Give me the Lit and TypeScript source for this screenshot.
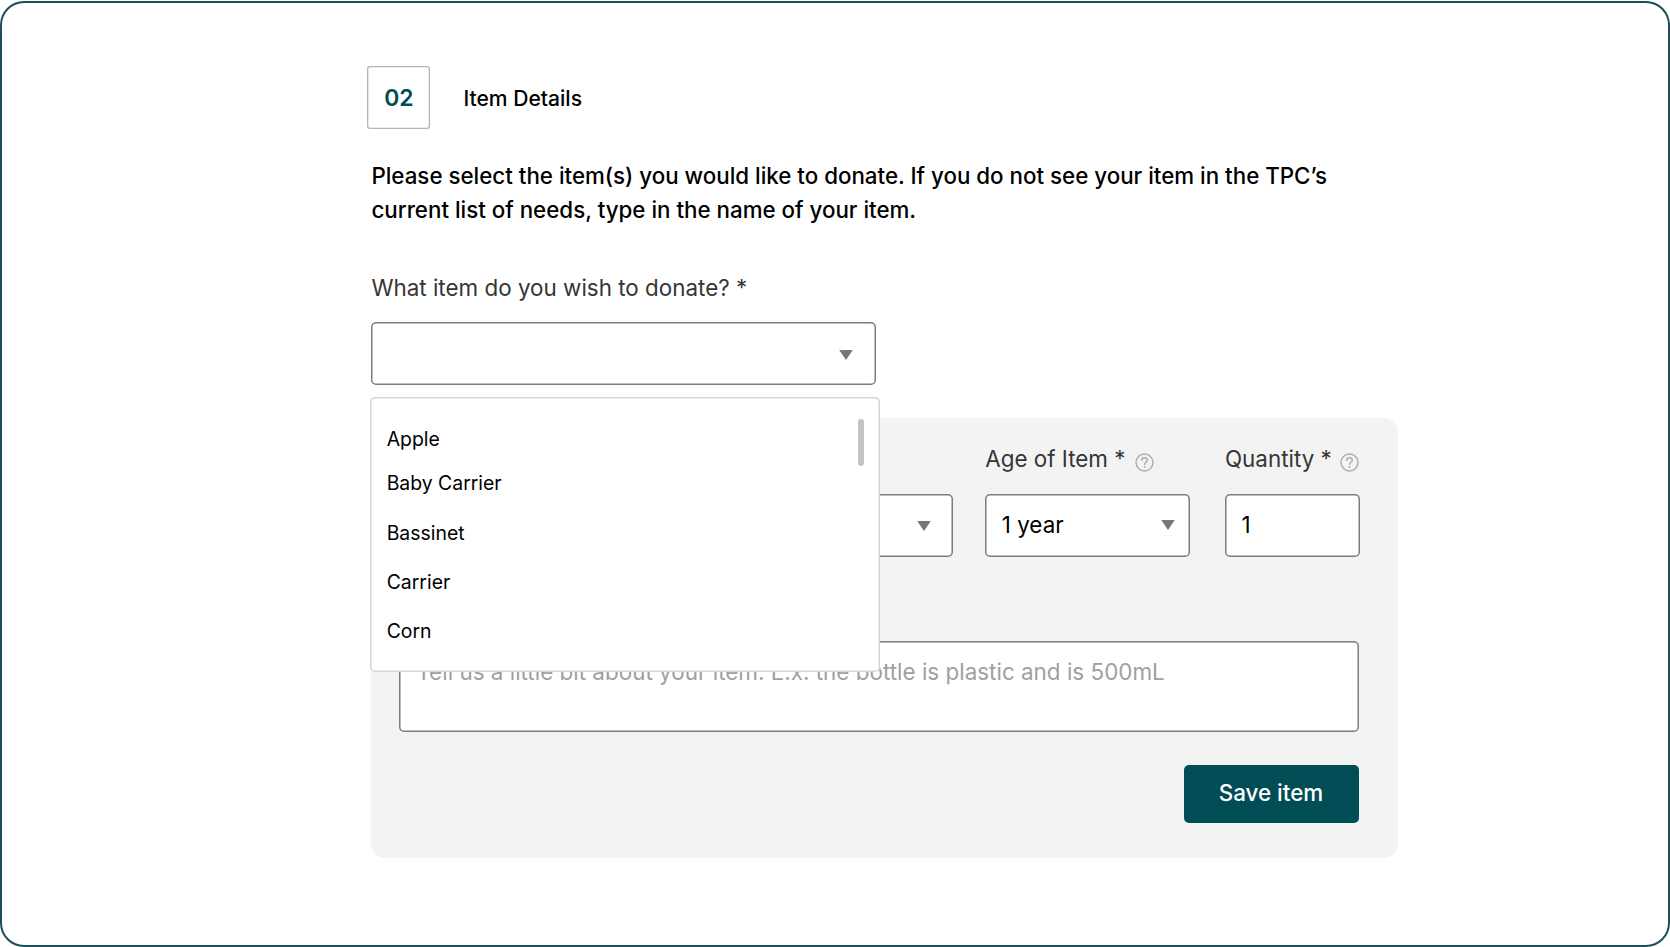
import { LitElement, html, css } from "lit";
import { customElement, property } from "lit/decorators.js";

@customElement("caret-icon")
class CaretIcon extends LitElement {
  static styles = css`
    :host { display: block; width: 14px; height: 10px; }
    svg { display: block; }
    path { fill: #777; }
  `;
  render() {
    return html`<svg width="14" height="10" viewBox="0 0 14 10"><path d="M0.2 0H13.8L7 10Z"/></svg>`;
  }
}

@customElement("help-icon")
class HelpIcon extends LitElement {
  static styles = css`
    :host { display: block; width: 19px; height: 19px; }
    svg { display: block; fill: none; stroke: #acacac; stroke-width: 1.4; stroke-linecap: round; }
    .dot { fill: #acacac; stroke: none; }
  `;
  render() {
    return html`<svg width="19" height="19" viewBox="0 0 19 19">
      <circle cx="9.5" cy="9.5" r="8.5"/>
      <path d="M6.7 7.4C6.7 5.7 7.9 4.8 9.5 4.8S12.3 5.8 12.3 7.3C12.3 9.1 9.6 9.3 9.6 11.4"/>
      <circle class="dot" cx="9.6" cy="13.9" r="1"/>
    </svg>`;
  }
}

@customElement("form-field")
class FormField extends LitElement {
  @property() value = "";
  @property({ type: Boolean }) caret = false;
  static styles = css`
    :host {
      box-sizing: border-box; display: flex; align-items: center; justify-content: space-between;
      height: 62.5px; padding: 0 15px 0 16.6px; background: #fff; border-radius: 5px;
      box-shadow: inset 0 0 0 1.5px #7d7d7d; color: #000; line-height: 27px;
    }
    .value { margin-top: -2.6px; }
    caret-icon { margin-top: var(--caret-shift, 0); }
  `;
  render() {
    return html`<span class="value">${this.value}</span>${this.caret ? html`<caret-icon></caret-icon>` : null}`;
  }
}

@customElement("item-menu")
class ItemMenu extends LitElement {
  static styles = css`
    :host {
      box-sizing: border-box; display: flex; justify-content: space-between; width: 510px; height: 274.5px;
      padding: 22px 16.5px 0 16.3px; background: #fff; border-radius: 5px;
      box-shadow: inset 0 0 0 1.5px #d5d5d5; color: #000; font-size: 19.4px; line-height: 24px;
    }
    ul { list-style: none; margin: 7.7px 0 0; padding: 0; display: flex; flex-direction: column; gap: 25.4px; }
    li:first-child { margin-bottom: -5px; }
    .thumb { width: 5.6px; height: 46.5px; border-radius: 3px; background: #c4c4c4; }
  `;
  items = ["Apple", "Baby Carrier", "Bassinet", "Carrier", "Corn"];
  render() {
    return html`<ul>${this.items.map((i) => html`<li>${i}</li>`)}</ul><div class="thumb"></div>`;
  }
}

@customElement("app-root")
class AppRoot extends LitElement {
  static styles = css`
    :host { display: block; font-family: Inter, sans-serif; font-size: 22.42px; line-height: 27px; color: #363636; }
    .frame {
      box-sizing: border-box; width: 1670px; height: 946.5px; margin-top: 0.5px; padding: 65.9px 0 0 371.4px;
      background: #fff; border-radius: 24px; box-shadow: inset 0 0 0 2px #1d4f58; overflow: hidden;
    }
    .head { display: flex; align-items: center; margin-left: -4px; gap: 33px; height: 63px; }
    .step {
      box-sizing: border-box; width: 63px; height: 63px; padding-top: 1px; display: flex; align-items: center; justify-content: center;
      box-shadow: inset 0 0 0 1.3px #b5b5b5; border-radius: 3px; color: #004d56; font-weight: 600; font-size: 22.9px;
    }
    .title { padding-top: 1px; font-size: 21.1px; font-weight: 500; color: #000; }
    .intro { margin: 29.6px 0 0; width: 1000px; line-height: 34px; font-size: 22.34px; font-weight: 500; color: #000; }
    .question { margin-top: 47px; }
    .picker { position: relative; width: 504.6px; margin-top: 21.2px; --caret-shift: 4px; }
    .picker form-field { padding-right: 22.5px; }
    item-menu { position: absolute; left: -1px; top: 75px; z-index: 1; }
    .panel { box-sizing: border-box; width: 1026.6px; height: 440.5px; margin-top: 33px; padding: 27px 39px 36px 28px; border-radius: 14px; background: #f3f3f3; }
    .row { display: flex; align-items: flex-end; }
    .row > div { flex: none; }
    .condition { width: 553.8px; --caret-shift: 1px; }
    .condition form-field { padding-right: 22.5px; }
    .age { width: 204.5px; margin-left: 32px; --caret-shift: -1px; }
    .qty { width: 135px; margin-left: 35.3px; }
    .label { display: flex; margin-bottom: 22.2px; }
    .label help-icon { margin-top: 8.6px; margin-left: 10px; }
    .qty .label help-icon { margin-left: 8px; }
    .notes {
      box-sizing: border-box; height: 91px; margin-top: 84px; padding: 17px 17px; background: #fff; border-radius: 5px;
      box-shadow: inset 0 0 0 1.5px #7d7d7d; color: #a0a0a0; font-size: 22.45px;
    }
    .actions { display: flex; justify-content: flex-end; margin-top: 33px; }
    button {
      width: 174.7px; height: 57.6px; padding: 0 1.4px 1.6px 0; border: 0; border-radius: 5px; background: #004d56; color: #fff;
      font: 500 22.4px Inter, sans-serif;
    }
  `;
  render() {
    return html`<main class="frame">
      <div class="head"><div class="step">02</div><div class="title">Item Details</div></div>
      <p class="intro">Please select the item(s) you would like to donate. If you do not see your item in the TPC’s current list of needs, type in the name of your item.</p>
      <div class="question">What item do you wish to donate? *</div>
      <div class="picker"><form-field caret></form-field><item-menu></item-menu></div>
      <section class="panel">
        <div class="row">
          <div class="condition"><form-field caret></form-field></div>
          <div class="age">
            <div class="label">Age of Item *<help-icon></help-icon></div>
            <form-field caret value="1 year"></form-field>
          </div>
          <div class="qty">
            <div class="label">Quantity *<help-icon></help-icon></div>
            <form-field value="1"></form-field>
          </div>
        </div>
        <div class="notes">Tell us a little bit about your item. E.x. the bottle is plastic and is 500mL</div>
        <div class="actions"><button>Save item</button></div>
      </section>
    </main>`;
  }
}
